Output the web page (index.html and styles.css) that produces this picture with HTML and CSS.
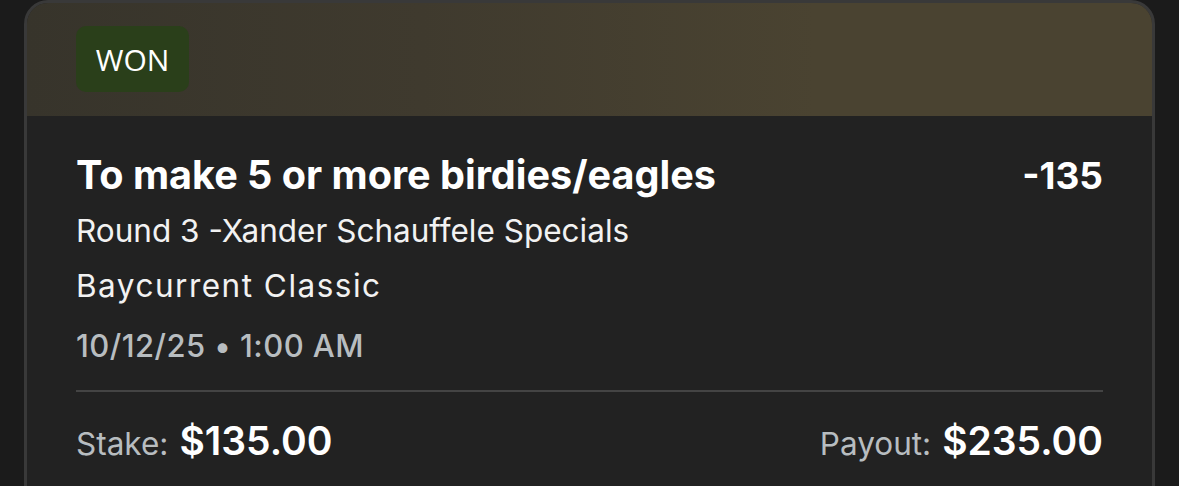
FILE: index.html
```html
<!DOCTYPE html>
<html>
<head>
<meta charset="utf-8">
<link rel="stylesheet" href="styles.css">
</head>
<body>
<div class="page">
  <div class="card">
    <div class="card-head">
      <span class="badge">WON</span>
    </div>
    <div class="card-body">
      <div class="title-row">
        <div class="title">To make 5 or more birdies/eagles</div>
        <div class="odds">-135</div>
      </div>
      <div class="market">Round 3 -Xander Schauffele Specials</div>
      <div class="event">Baycurrent Classic</div>
      <div class="date">10/12/25 • 1:00 AM</div>
      <div class="divider"></div>
      <div class="money-row">
        <div class="money"><span class="label">Stake:</span><span class="value">$135.00</span></div>
        <div class="money"><span class="label">Payout:</span><span class="value">$235.00</span></div>
      </div>
    </div>
  </div>
</div>
</body>
</html>
```
FILE: styles.css
```css
html, body {
  margin: 0;
  padding: 0;
  background: #1b1b1b;
  height: 486px;
  overflow: hidden;
}
.page {
  padding: 0 24px 0 24px;
  width: 1131px;
}
.card {
  border: 3px solid #393939;
  border-radius: 24px;
  overflow: hidden;
  background: #222222;
  height: 600px;
  font-family: Inter, "Liberation Sans", sans-serif;
}
.card-head {
  height: 113px;
  box-sizing: border-box;
  padding: 23px 0 0 49px;
  background: linear-gradient(90deg, #37342b 0%, #3f3a2e 35%, #4a4331 70%, #4a4331 100%);
}
.badge {
  display: inline-flex;
  align-items: center;
  justify-content: center;
  width: 113px;
  height: 66px;
  border-radius: 10px;
  background: #2a3f1a;
  color: #ffffff;
  font-family: "Open Sans", sans-serif;
  font-size: 30px;
}
.card-body {
  padding: 35px 49px 0 49px;
  color: #f2f2f2;
}
.title-row {
  display: flex;
  justify-content: space-between;
  align-items: baseline;
}
.title {
  font-size: 39.6px;
  line-height: 48px;
  font-weight: 700;
  color: #ffffff;
}
.odds {
  font-size: 37px;
  line-height: 48px;
  font-weight: 700;
  color: #ffffff;
}
.market {
  margin-top: 11px;
  font-size: 31.5px;
  line-height: 40px;
}
.event {
  margin-top: 15px;
  font-size: 31.5px;
  line-height: 40px;
  letter-spacing: 1.5px;
}
.date {
  margin-top: 20px;
  font-size: 31px;
  line-height: 40px;
  font-weight: 500;
  letter-spacing: 0.45px;
  color: #b8bdc0;
}
.divider {
  margin-top: 24px;
  height: 2px;
  background: #444444;
}
.money-row {
  margin-top: 25px;
  display: flex;
  justify-content: space-between;
  align-items: baseline;
}
.money {
  display: flex;
  align-items: baseline;
  gap: 11px;
}
.label {
  font-size: 31.5px;
  line-height: 48px;
  color: #b8bdc0;
}
.value {
  font-size: 39px;
  line-height: 48px;
  font-weight: 600;
  color: #ffffff;
}
```
